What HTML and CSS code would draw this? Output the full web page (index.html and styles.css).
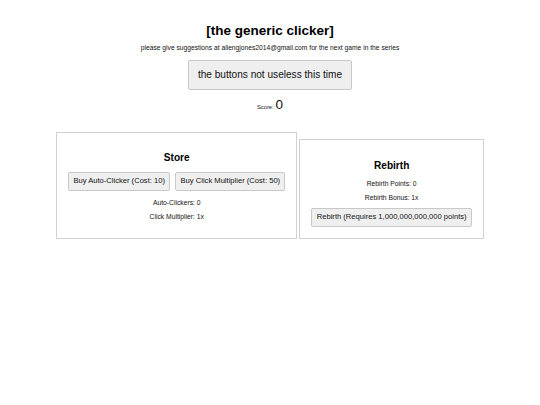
FILE: index.html
```html
<!DOCTYPE html>
<html>
<head>
<meta charset="utf-8">
<title>[the generic clicker]</title>
<link rel="stylesheet" href="styles.css">
</head>
<body>
<main class="page">
  <h1 class="title">[the generic clicker]</h1>
  <p class="sub">please give suggestions at allengjones2014@gmail.com for the next game in the series</p>
  <button class="main-btn">the buttons not useless this time</button>
  <p class="score"><span class="score-label">Score:</span> <span class="score-value">0</span></p>
  <div class="panels"><section class="panel store">
      <h2 class="panel-title">Store</h2>
      <div class="btn-row">
        <button class="btn">Buy Auto-Clicker (Cost: 10)</button>
        <button class="btn">Buy Click Multiplier (Cost: 50)</button>
      </div>
      <p class="stat">Auto-Clickers: 0</p>
      <p class="stat last">Click Multiplier: 1x</p>
    </section><section class="panel rebirth">
      <h2 class="panel-title">Rebirth</h2>
      <p class="stat">Rebirth Points: 0</p>
      <p class="stat">Rebirth Bonus: 1x</p>
      <div class="btn-line"><button class="btn">Rebirth (Requires 1,000,000,000,000 points)</button></div>
    </section></div>
</main>
</body>
</html>
```

FILE: styles.css
```css
html, body {
  margin: 0;
  padding: 0;
  background: #ffffff;
}

body {
  font-family: "Liberation Sans", Arial, sans-serif;
  color: #111;
  font-size: 6.75px;
}

.page {
  display: flex;
  flex-direction: column;
  align-items: center;
  text-align: center;
  padding-top: 22.5px;
}

.title {
  font-size: 13.5px;
  font-weight: bold;
  margin: 0;
  line-height: 15.5px;
  color: #000;
}

.sub {
  font-size: 6.7px;
  margin: 6.3px 0 0;
  line-height: 7.6px;
}

.main-btn {
  margin-top: 8.2px;
  font-family: inherit;
  font-size: 10.1px;
  line-height: 11.6px;
  padding: 8.2px 8.5px;
  background: #efefef;
  border: 1px solid #c8c8c8;
  border-radius: 2px;
  color: #111;
}

.score {
  margin: 6.5px 0 0;
  line-height: 15px;
}

.score-label {
  font-size: 5.8px;
}

.score-value {
  font-size: 13.5px;
}

.panels {
  margin-top: 17px;
  text-align: center;
  white-space: nowrap;
}

.panel {
  display: inline-block;
  vertical-align: baseline;
  border: 1px solid #d2d2d2;
  padding: 11px;
  white-space: normal;
}

.rebirth {
  margin-left: 2px;
}

.panel-title {
  font-size: 10.1px;
  line-height: 11.6px;
  font-weight: bold;
  margin: 8.4px 0;
  color: #000;
}

.btn-row {
  display: flex;
  gap: 5px;
}

.btn {
  font-family: inherit;
  font-size: 7.6px;
  line-height: 8.7px;
  padding: 4.3px 4.3px;
  background: #efefef;
  border: 1px solid #c8c8c8;
  border-radius: 2px;
  color: #111;
}

.stat {
  margin: 6.75px 0 0;
  line-height: 7.8px;
}

.btn-row + .stat {
  margin-top: 7.5px;
}

.stat.last {
  margin-bottom: 5.5px;
}

.btn-line {
  margin-top: 6px;
  line-height: 0;
}
```
